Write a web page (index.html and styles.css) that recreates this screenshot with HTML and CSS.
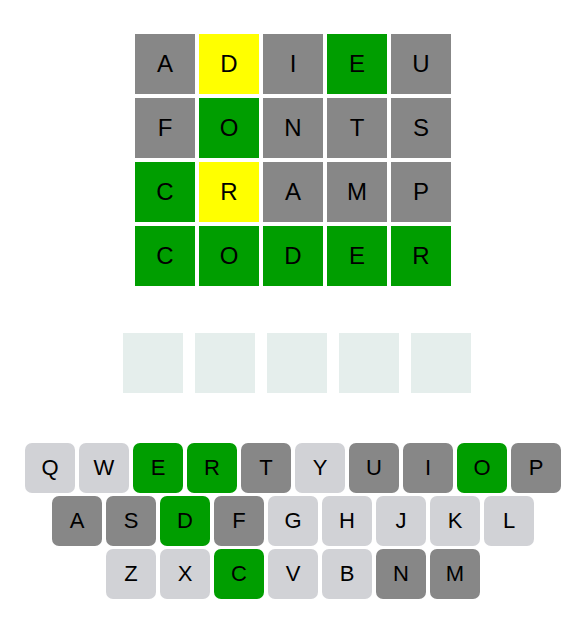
FILE: index.html
```html
<!DOCTYPE html>
<html>
<head>
<meta charset="utf-8">
<link rel="stylesheet" href="styles.css">
</head>
<body>
<div class="app">
  <div class="board">
    <div class="row"><div class="tile gray">A</div><div class="tile yellow">D</div><div class="tile gray">I</div><div class="tile green">E</div><div class="tile gray">U</div></div>
    <div class="row"><div class="tile gray">F</div><div class="tile green">O</div><div class="tile gray">N</div><div class="tile gray">T</div><div class="tile gray">S</div></div>
    <div class="row"><div class="tile green">C</div><div class="tile yellow">R</div><div class="tile gray">A</div><div class="tile gray">M</div><div class="tile gray">P</div></div>
    <div class="row"><div class="tile green">C</div><div class="tile green">O</div><div class="tile green">D</div><div class="tile green">E</div><div class="tile green">R</div></div>
  </div>
  <div class="inputs">
    <div class="slot"></div><div class="slot"></div><div class="slot"></div><div class="slot"></div><div class="slot"></div>
  </div>
  <div class="keyboard">
    <div class="krow">
      <div class="key">Q</div><div class="key">W</div><div class="key k-green">E</div><div class="key k-green">R</div><div class="key k-gray">T</div><div class="key">Y</div><div class="key k-gray">U</div><div class="key k-gray">I</div><div class="key k-green">O</div><div class="key k-gray">P</div>
    </div>
    <div class="krow">
      <div class="key k-gray">A</div><div class="key k-gray">S</div><div class="key k-green">D</div><div class="key k-gray">F</div><div class="key">G</div><div class="key">H</div><div class="key">J</div><div class="key">K</div><div class="key">L</div>
    </div>
    <div class="krow">
      <div class="key">Z</div><div class="key">X</div><div class="key k-green">C</div><div class="key">V</div><div class="key">B</div><div class="key k-gray">N</div><div class="key k-gray">M</div>
    </div>
  </div>
</div>
</body>
</html>
```
FILE: styles.css
```css
html, body {
  margin: 0;
  padding: 0;
  background: #ffffff;
}
body {
  font-family: "Liberation Sans", Arial, sans-serif;
  color: #000;
}
.app {
  display: flex;
  flex-direction: column;
  align-items: center;
  padding-left: 6px;
  padding-top: 34px;
}
.board {
  display: flex;
  flex-direction: column;
  gap: 4px;
}
.row {
  display: flex;
  gap: 4px;
}
.tile {
  width: 60px;
  height: 60px;
  display: flex;
  align-items: center;
  justify-content: center;
  font-size: 24px;
}
.gray { background: #878787; }
.green { background: #009e00; }
.yellow { background: #ffff00; }
.inputs {
  display: flex;
  gap: 12px;
  margin-top: 47px;
  margin-left: 8px;
}
.slot {
  width: 60px;
  height: 60px;
  background: #e5eeec;
}
.keyboard {
  display: flex;
  flex-direction: column;
  align-items: center;
  gap: 3px;
  margin-top: 50px;
}
.krow {
  display: flex;
  gap: 4px;
}
.key {
  width: 50px;
  height: 50px;
  border-radius: 7px;
  background: #d1d2d6;
  display: flex;
  align-items: center;
  justify-content: center;
  font-size: 22px;
}
.k-gray { background: #878787; }
.k-green { background: #009e00; }
```
